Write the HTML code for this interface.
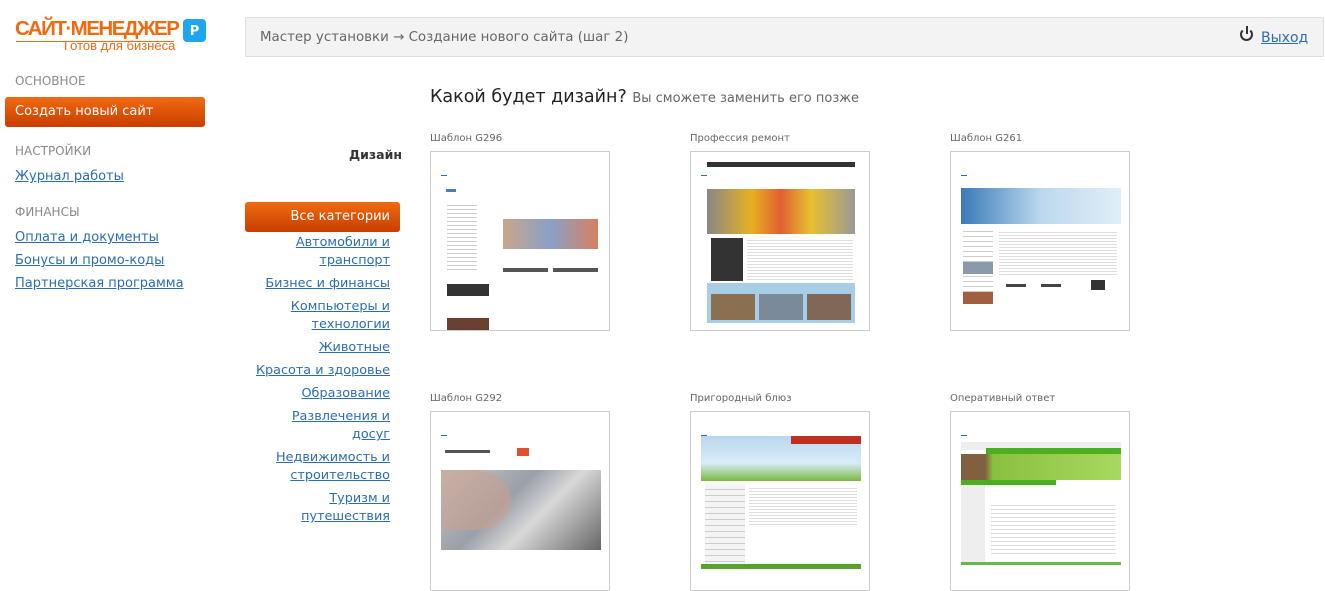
<!DOCTYPE html>
<html><head><meta charset="utf-8"><style>
*{margin:0;padding:0;box-sizing:border-box}
body{width:1325px;height:589px;overflow:hidden;background:#fff;font-family:"DejaVu Sans","Liberation Sans",sans-serif;font-size:13px;color:#333;position:relative}
.a{position:absolute}
a{color:#2a6db5;text-decoration:underline}
.sec{position:absolute;left:15px;font-size:12px;color:#8a8a8a}
.btn{position:absolute;background:linear-gradient(#f06a10,#c83e00);color:#fff;border-radius:3px;height:30px;line-height:30px}
.lnk{position:absolute;left:15px}
.cats{position:absolute;left:235px;width:155px;top:234px;text-align:right;line-height:18px;font-size:12.8px}
.cats div{margin-bottom:5px}
.t{position:absolute;font-size:10px;color:#666}
.box{position:absolute;width:180px;height:180px;border:1px solid #ccc;background:#fff;overflow:hidden}
.box .m{position:absolute;left:10px;top:23px;width:6px;height:1px;background:#2a6db5}
.box div{position:absolute}
</style></head><body>
<div class="a" style="left:15px;top:17px;font-size:20.5px;font-weight:bold;color:#f06a10;letter-spacing:-1.5px;font-family:'Liberation Sans',sans-serif">САЙТ·МЕНЕДЖЕР</div>
<div class="a" style="left:16px;top:41px;width:158px;height:1px;background:#f06a10"></div>
<div class="a" style="left:64px;top:38px;font-size:13px;color:#f06a10;font-family:'Liberation Sans',sans-serif">Готов для бизнеса</div>
<div class="a" style="left:183px;top:19px;width:23px;height:23px;background:#1ea7f0;border-radius:4px;color:#fff;font-weight:bold;font-size:13px;text-align:center;line-height:25px">P</div>
<div class="sec" style="top:74px">ОСНОВНОЕ</div>
<div class="btn" style="left:5px;top:97px;width:200px;padding-left:10px">Создать новый сайт</div>
<div class="sec" style="top:144px">НАСТРОЙКИ</div>
<a class="lnk" style="top:169px">Журнал работы</a>
<div class="sec" style="top:205px">ФИНАНСЫ</div>
<a class="lnk" style="top:230px">Оплата и документы</a>
<a class="lnk" style="top:253px">Бонусы и промо-коды</a>
<a class="lnk" style="top:276px">Партнерская программа</a>

<div class="a" style="left:245px;top:17px;width:1079px;height:40px;background:#f3f3f3;border:1px solid #ddd;border-radius:2px"></div>
<div class="a" style="left:260px;top:30px;font-size:13.4px;color:#666">Мастер установки → Создание нового сайта (шаг 2)</div>
<div class="a" style="left:1240px;top:28px;width:13px;height:13px;border:2px solid #333;border-top-color:transparent;border-radius:50%"></div>
<div class="a" style="left:1245.5px;top:26px;width:2px;height:8px;background:#333"></div>
<a class="a" style="left:1261px;top:30px;font-size:14px">Выход</a>

<div class="a" style="left:430px;top:87px;font-size:17.5px;color:#222">Какой будет дизайн? <span style="font-size:13px;color:#666">Вы сможете заменить его позже</span></div>
<div class="a" style="left:349px;top:147px;font-weight:bold;font-size:12.5px">Дизайн</div>
<div class="btn" style="left:245px;top:202px;width:155px;text-align:right;padding-right:10px">Все категории</div>
<div class="cats">
<div><a>Автомобили и<br>транспорт</a></div>
<div><a>Бизнес и финансы</a></div>
<div><a>Компьютеры и<br>технологии</a></div>
<div><a>Животные</a></div>
<div><a>Красота и здоровье</a></div>
<div><a>Образование</a></div>
<div><a>Развлечения и<br>досуг</a></div>
<div><a>Недвижимость и<br>строительство</a></div>
<div><a>Туризм и<br>путешествия</a></div>
</div>

<div class="t" style="left:430px;top:133px">Шаблон G296</div>
<div class="t" style="left:690px;top:133px">Профессия ремонт</div>
<div class="t" style="left:950px;top:133px">Шаблон G261</div>
<div class="t" style="left:430px;top:393px">Шаблон G292</div>
<div class="t" style="left:690px;top:393px">Пригородный блюз</div>
<div class="t" style="left:950px;top:393px">Оперативный ответ</div>

<div class="box" style="left:430px;top:151px"><span class="m"></span>
<div style="left:15px;top:37px;width:10px;height:3px;background:#4a7ac0"></div>
<div style="left:72px;top:67px;width:95px;height:30px;background:linear-gradient(90deg,#c9a68a,#8aa0c8,#d88060)"></div>
<div style="left:72px;top:116px;width:45px;height:4px;background:#555"></div>
<div style="left:122px;top:116px;width:45px;height:4px;background:#555"></div>
<div style="left:16px;top:132px;width:42px;height:12px;background:#333"></div>
<div style="left:16px;top:166px;width:42px;height:14px;background:#6a4030"></div>
<div style="left:16px;top:50px;width:30px;height:70px;background:repeating-linear-gradient(#fff 0 3px,#ccc 3px 4px)"></div>
</div>

<div class="box" style="left:690px;top:151px"><span class="m"></span>
<div style="left:16px;top:10px;width:148px;height:5px;background:#333"></div>
<div style="left:16px;top:37px;width:148px;height:45px;background:linear-gradient(90deg,#888,#e8b020 30%,#e06030 50%,#e8c030 70%,#999)"></div>
<div style="left:20px;top:86px;width:32px;height:43px;background:#333"></div>
<div style="left:56px;top:86px;width:106px;height:43px;background:repeating-linear-gradient(#fff 0 2px,#ddd 2px 3px)"></div>
<div style="left:16px;top:131px;width:148px;height:40px;background:#a8cde6"></div>
<div style="left:20px;top:142px;width:44px;height:26px;background:#8a7050"></div>
<div style="left:68px;top:142px;width:44px;height:26px;background:#7a8a9a"></div>
<div style="left:116px;top:142px;width:44px;height:26px;background:#806858"></div>
</div>

<div class="box" style="left:950px;top:151px"><span class="m"></span>
<div style="left:10px;top:36px;width:160px;height:36px;background:linear-gradient(90deg,#3a7ab8,#bcd8ee 50%,#e0eef8)"></div>
<div style="left:12px;top:75px;width:30px;height:75px;background:repeating-linear-gradient(#fff 0 4px,#ccc 4px 5px)"></div>
<div style="left:12px;top:110px;width:30px;height:12px;background:#8a9aaa"></div>
<div style="left:12px;top:140px;width:30px;height:12px;background:#a06040"></div>
<div style="left:48px;top:78px;width:118px;height:45px;background:repeating-linear-gradient(#fff 0 2px,#ddd 2px 3px)"></div>
<div style="left:55px;top:132px;width:20px;height:3px;background:#444"></div>
<div style="left:90px;top:132px;width:20px;height:3px;background:#444"></div>
<div style="left:140px;top:128px;width:14px;height:10px;background:#333"></div>
</div>

<div class="box" style="left:430px;top:411px"><span class="m"></span>
<div style="left:86px;top:36px;width:12px;height:8px;background:#e05030"></div>
<div style="left:14px;top:38px;width:45px;height:3px;background:#555"></div>
<div style="left:10px;top:58px;width:160px;height:80px;background:linear-gradient(135deg,#c8c8c8,#9aa0a8 40%,#d8d8d8 60%,#666)"></div>
<div style="left:10px;top:58px;width:70px;height:60px;background:#caa090;opacity:.6;border-radius:0 50% 50% 0"></div>
</div>

<div class="box" style="left:690px;top:411px"><span class="m"></span>
<div style="left:10px;top:24px;width:160px;height:45px;background:linear-gradient(#b8d8f0,#d8ecf8 60%,#7ab840)"></div>
<div style="left:100px;top:24px;width:70px;height:8px;background:#c03020"></div>
<div style="left:10px;top:69px;width:160px;height:85px;background:#fff"></div>
<div style="left:14px;top:72px;width:40px;height:80px;background:repeating-linear-gradient(#f4f4f4 0 5px,#ccc 5px 6px)"></div>
<div style="left:58px;top:74px;width:108px;height:40px;background:repeating-linear-gradient(#fff 0 2px,#ddd 2px 3px)"></div>
<div style="left:10px;top:152px;width:160px;height:5px;background:#5aa030"></div>
</div>

<div class="box" style="left:950px;top:411px"><span class="m"></span>
<div style="left:10px;top:30px;width:160px;height:8px;background:#eee"></div>
<div style="left:35px;top:36px;width:135px;height:6px;background:#4ab020"></div>
<div style="left:10px;top:42px;width:160px;height:26px;background:linear-gradient(90deg,#806040 15%,#8ac040 20%,#a8d860)"></div>
<div style="left:10px;top:68px;width:95px;height:5px;background:#4ab020"></div>
<div style="left:10px;top:73px;width:24px;height:80px;background:#eee"></div>
<div style="left:40px;top:90px;width:125px;height:55px;background:repeating-linear-gradient(#fff 0 3px,#ddd 3px 4px)"></div>
<div style="left:10px;top:150px;width:160px;height:3px;background:#6ab84a"></div>
</div>
</body></html>
